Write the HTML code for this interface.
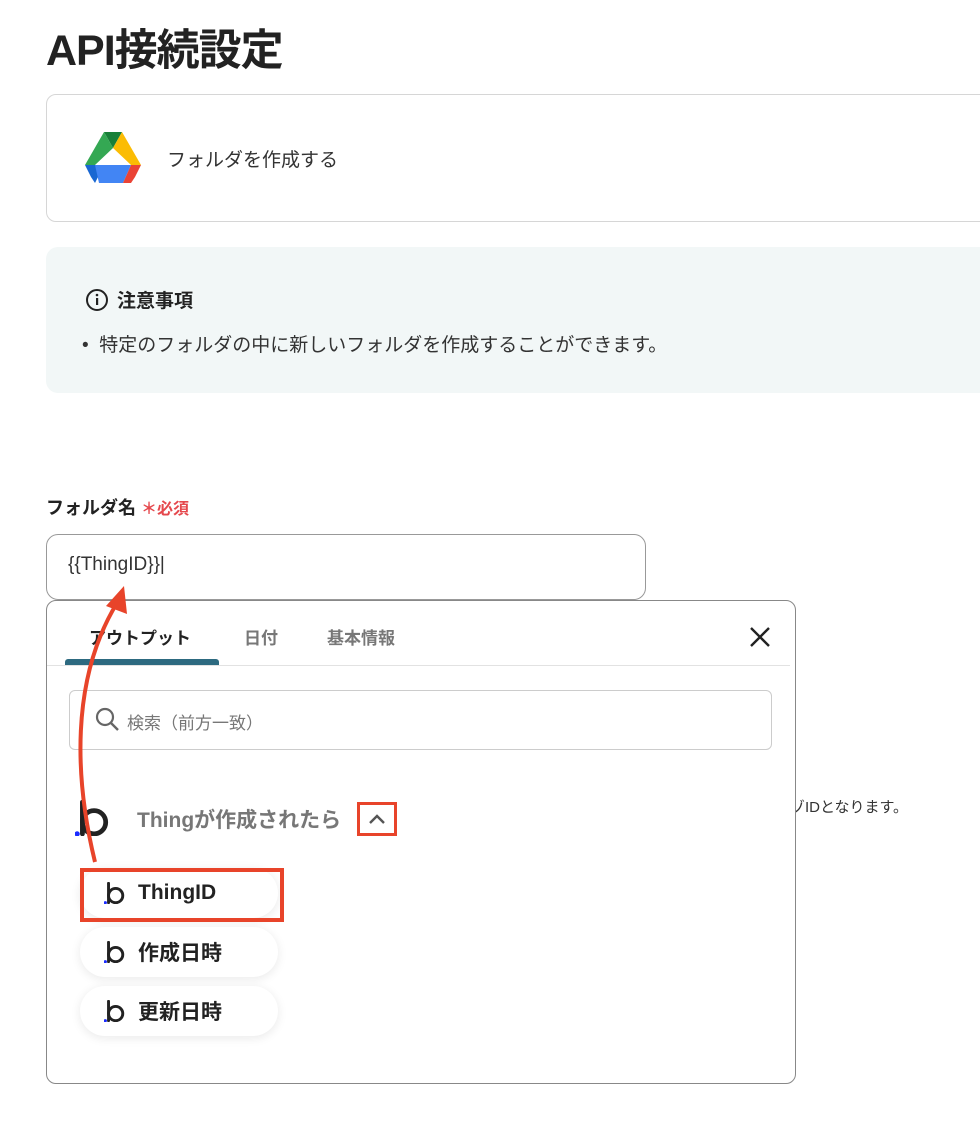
<!DOCTYPE html>
<html><head><meta charset="utf-8"><style>
*{box-sizing:border-box;margin:0;padding:0}
body{width:980px;height:1122px;background:#fff;font-family:"Liberation Sans","Noto Sans CJK JP",sans-serif;color:#222;position:relative;overflow:hidden}
.a{position:absolute}
.pill{position:absolute;left:80px;width:198px;height:50px;border-radius:25px;background:#fff;box-shadow:0 2px 10px rgba(0,0,0,.09);font-weight:bold;font-size:21px;display:flex;align-items:center;padding-left:24px}
.pill svg{margin-right:12px}
</style></head><body>
<svg width="0" height="0" style="position:absolute"><defs><g id="bl"><path d="M7 2V32" stroke="#222" stroke-width="4.5" fill="none" stroke-linecap="round"/><circle cx="18" cy="21" r="11" stroke="#222" stroke-width="4.5" fill="none"/><circle cx="2" cy="32" r="2.5" fill="#1a2bff"/></g></defs></svg>
<div class="a" style="left:46px;top:16px;font-size:43px;font-weight:bold;letter-spacing:-1px">API接続設定</div>
<div class="a" style="left:46px;top:94px;width:960px;height:128px;border:1px solid #d6d6d6;border-radius:10px"></div>
<svg class="a" style="left:85px;top:132px" width="56" height="51" viewBox="0 0 56 51">
<path d="M19 0h18l-9 16z" fill="#188038"/><path d="M19 0L0 33l10 0 18-17z" fill="#34a853"/><path d="M37 0l19 33H46L28 16z" fill="#fbbc04"/>
<path d="M0 33l6 12 4 6 9-18z" fill="#1967d2"/><path d="M10 33h36l-8 18H14z" fill="#4285f4"/><path d="M46 33h10l-6 12-4 6-8 0z" fill="#ea4335"/></svg>
<div class="a" style="left:167px;top:145px;font-size:19px;color:#333">フォルダを作成する</div>
<div class="a" style="left:46px;top:247px;width:960px;height:146px;background:#f2f7f7;border-radius:12px"></div>
<svg class="a" style="left:85px;top:288px" width="24" height="24" viewBox="0 0 24 24"><circle cx="12" cy="12" r="10" fill="none" stroke="#222" stroke-width="2"/><rect x="11" y="10" width="2.2" height="7" fill="#222"/><circle cx="12" cy="7" r="1.3" fill="#222"/></svg>
<div class="a" style="left:117px;top:286px;font-size:19px;font-weight:bold">注意事項</div>
<div class="a" style="left:82px;top:330px;font-size:19px;color:#333">•&nbsp; 特定のフォルダの中に新しいフォルダを作成することができます。</div>
<div class="a" style="left:46px;top:494px;font-size:18px;font-weight:bold">フォルダ名 <span style="color:#e5484d;font-size:16px">＊必須</span></div>
<div class="a" style="left:46px;top:534px;width:600px;height:66px;border:1px solid #999;border-radius:12px"></div>
<div class="a" style="left:68px;top:554px;font-size:19px;color:#333">{{ThingID}}|</div>
<div class="a" style="left:790px;top:796px;font-size:15px;color:#333">ゾIDとなります。</div>
<div class="a" style="left:46px;top:600px;width:750px;height:484px;border:1px solid #888;border-radius:10px;background:#fff"></div>
<div class="a" style="left:89px;top:624px;font-size:17px;font-weight:bold;color:#222">アウトプット</div>
<div class="a" style="left:244px;top:624px;font-size:17px;font-weight:bold;color:#777">日付</div>
<div class="a" style="left:327px;top:624px;font-size:17px;font-weight:bold;color:#777">基本情報</div>
<div class="a" style="left:65px;top:659px;width:154px;height:6px;background:#2d6a80;border-radius:3px 3px 0 0"></div>
<div class="a" style="left:47px;top:665px;width:743px;height:1px;background:#e2e2e2"></div>
<svg class="a" style="left:749px;top:626px" width="22" height="22"><path d="M2 2L20 20M20 2L2 20" stroke="#222" stroke-width="2.4"/></svg>
<div class="a" style="left:69px;top:690px;width:703px;height:60px;border:1px solid #ccc;border-radius:6px"></div>
<svg class="a" style="left:95px;top:707px" width="26" height="26"><circle cx="10" cy="10" r="8" fill="none" stroke="#666" stroke-width="2.2"/><path d="M16 16l7 7" stroke="#666" stroke-width="2.4"/></svg>
<div class="a" style="left:127px;top:709px;font-size:17px;color:#777">検索（前方一致）</div>
<svg class="a" style="left:75px;top:800px" width="36" height="36" viewBox="0 0 34 34"><use href="#bl"/></svg>
<div class="a" style="left:137px;top:804px;font-size:21px;font-weight:bold;color:#777">Thingが作成されたら</div>
<div class="a" style="left:357px;top:802px;width:40px;height:34px;border:3px solid #e8442a"></div>
<svg class="a" style="left:367px;top:812px" width="20" height="14"><path d="M3 11L10 4L17 11" fill="none" stroke="#555" stroke-width="2.4"/></svg>
<div class="pill" style="top:868px"><svg width="22" height="22" viewBox="0 0 34 34"><use href="#bl"/></svg>ThingID</div>
<div class="a" style="left:80px;top:868px;width:204px;height:54px;border:4px solid #e8442a"></div>
<div class="pill" style="top:927px"><svg width="22" height="22" viewBox="0 0 34 34"><use href="#bl"/></svg>作成日時</div>
<div class="pill" style="top:986px"><svg width="22" height="22" viewBox="0 0 34 34"><use href="#bl"/></svg>更新日時</div>
<svg class="a" style="left:0;top:0" width="300" height="880"><path d="M95 862C75 780 70 680 117 603" fill="none" stroke="#e8442a" stroke-width="4"/><path d="M106 606L124 586L127 614z" fill="#e8442a"/></svg>
</body></html>
